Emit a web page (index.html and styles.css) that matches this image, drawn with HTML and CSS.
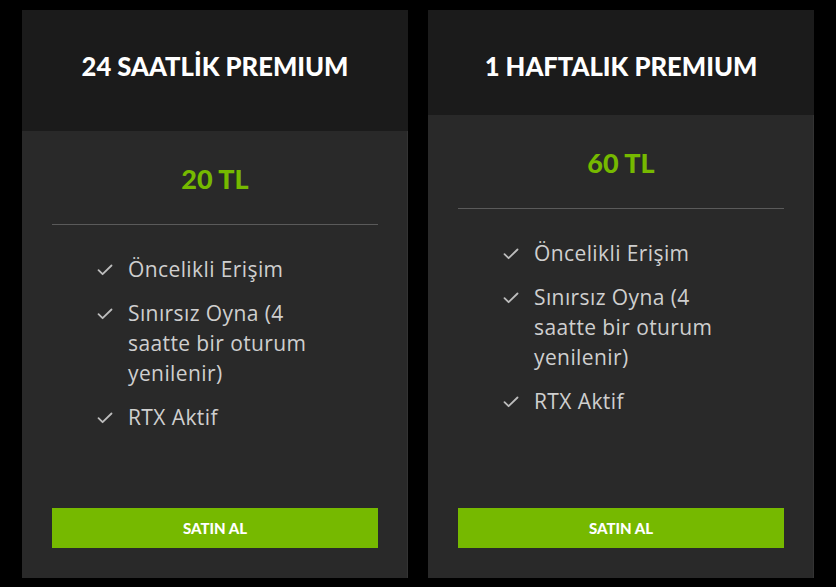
FILE: index.html
```html
<!DOCTYPE html>
<html lang="tr">
<head>
<meta charset="utf-8">
<title>Premium</title>
<link rel="stylesheet" href="styles.css">
</head>
<body>
<main class="plans">
  <section class="card">
    <header class="card-head card-head--tall"><h2 class="title">24 SAATLİK PREMIUM</h2></header>
    <div class="card-body">
      <div class="price">20 TL</div>
      <hr class="divider">
      <ul class="features">
        <li><svg class="check" viewBox="0 0 16 12"><path d="M1.5 6.2 L5.6 10.2 L14.5 1.5" fill="none" stroke="currentColor" stroke-width="1.8" stroke-linecap="round" stroke-linejoin="round"/></svg><span>Öncelikli Erişim</span></li>
        <li><svg class="check" viewBox="0 0 16 12"><path d="M1.5 6.2 L5.6 10.2 L14.5 1.5" fill="none" stroke="currentColor" stroke-width="1.8" stroke-linecap="round" stroke-linejoin="round"/></svg><span>Sınırsız Oyna (4 saatte bir oturum yenilenir)</span></li>
        <li><svg class="check" viewBox="0 0 16 12"><path d="M1.5 6.2 L5.6 10.2 L14.5 1.5" fill="none" stroke="currentColor" stroke-width="1.8" stroke-linecap="round" stroke-linejoin="round"/></svg><span>RTX Aktif</span></li>
      </ul>
      <button class="buy">SATIN AL</button>
    </div>
  </section>
  <section class="card">
    <header class="card-head"><h2 class="title">1 HAFTALIK PREMIUM</h2></header>
    <div class="card-body">
      <div class="price">60 TL</div>
      <hr class="divider">
      <ul class="features">
        <li><svg class="check" viewBox="0 0 16 12"><path d="M1.5 6.2 L5.6 10.2 L14.5 1.5" fill="none" stroke="currentColor" stroke-width="1.8" stroke-linecap="round" stroke-linejoin="round"/></svg><span>Öncelikli Erişim</span></li>
        <li><svg class="check" viewBox="0 0 16 12"><path d="M1.5 6.2 L5.6 10.2 L14.5 1.5" fill="none" stroke="currentColor" stroke-width="1.8" stroke-linecap="round" stroke-linejoin="round"/></svg><span>Sınırsız Oyna (4 saatte bir oturum yenilenir)</span></li>
        <li><svg class="check" viewBox="0 0 16 12"><path d="M1.5 6.2 L5.6 10.2 L14.5 1.5" fill="none" stroke="currentColor" stroke-width="1.8" stroke-linecap="round" stroke-linejoin="round"/></svg><span>RTX Aktif</span></li>
      </ul>
      <button class="buy">SATIN AL</button>
    </div>
  </section>
</main>
</body>
</html>
```
FILE: styles.css
```css
* { box-sizing: border-box; }
html, body { margin: 0; background: #000; }
body {
  font-family: Lato, "Noto Sans", sans-serif;
  width: 836px;
  height: 587px;
  overflow: hidden;
}
.plans {
  display: flex;
  gap: 20px;
  padding: 10px 22px 9px;
  height: 587px;
}
.card {
  width: 386px;
  display: flex;
  flex-direction: column;
  background: #292929;
  box-shadow: inset -1px 0 0 #333;
}
.card-head {
  background: #1b1b1b;
  height: 105px;
  padding-top: 41px;
  text-align: center;
}
.card-head--tall { height: 121px; }
.title {
  margin: 0;
  color: #fff;
  font-weight: 900;
  font-size: 25.6px;
  line-height: 30px;
  letter-spacing: 0;
}
.card-body {
  flex: 1;
  display: flex;
  flex-direction: column;
  padding: 33px 30px 30px;
}
.price {
  text-align: center;
  color: #76b900;
  font-weight: 900;
  font-size: 27px;
  line-height: 30px;
}
.divider {
  margin: 30px 0 0;
  border: 0;
  height: 1px;
  background: #5a5a5a;
}
.features {
  list-style: none;
  margin: 29px 45px 0;
  padding: 0;
  display: flex;
  flex-direction: column;
  gap: 14px;
}
.features li {
  display: flex;
  align-items: flex-start;
  gap: 15px;
  color: #cfcfcf;
  font-family: "Open Sans", "Noto Sans", sans-serif;
  font-size: 21px;
  letter-spacing: 0.4px;
  line-height: 30px;
}
.features li span { max-width: 200px; }
.check {
  flex: none;
  width: 16px;
  height: 12px;
  margin-top: 10px;
  color: #bdbdbd;
}
.buy {
  margin-top: auto;
  height: 40px;
  border: 0;
  background: #76b900;
  color: #fff;
  font-family: Lato, "Noto Sans", sans-serif;
  font-weight: 900;
  font-size: 15px;
  letter-spacing: 0;
}
```
